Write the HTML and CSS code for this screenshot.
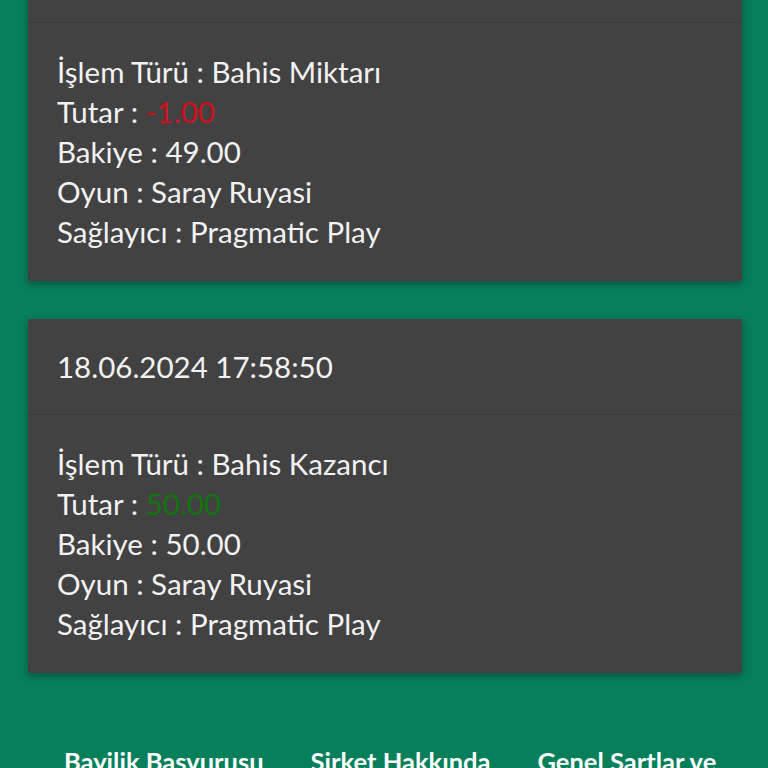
FILE: index.html
```html
<!DOCTYPE html>
<html lang="tr">
  <head>
    <meta charset="utf-8" />
    <link rel="stylesheet" href="styles.css">
  </head>
  <body>
    <div class="list">
      <div class="card">
        <div class="card-head"></div>
        <div class="card-body">
          <div>İşlem Türü : Bahis Miktarı</div>
          <div>Tutar : <span class="neg">-1.00</span></div>
          <div>Bakiye : 49.00</div>
          <div>Oyun : Saray Ruyasi</div>
          <div>Sağlayıcı : Pragmatic Play</div>
        </div>
      </div>
      <div class="card">
        <div class="card-head">18.06.2024 17:58:50</div>
        <div class="card-body">
          <div>İşlem Türü : Bahis Kazancı</div>
          <div>Tutar : <span class="pos">50.00</span></div>
          <div>Bakiye : 50.00</div>
          <div>Oyun : Saray Ruyasi</div>
          <div>Sağlayıcı : Pragmatic Play</div>
        </div>
      </div>
    </div>
    <div class="footer">
      <a href="#">Bayilik Basvurusu</a>
      <a href="#">Sirket Hakkında</a>
      <a href="#">Genel Sartlar ve</a>
    </div>
  </body>
</html>
```

FILE: styles.css
```css
* {
  margin: 0;
  box-sizing: border-box;
}
body {
  background-color: #077f5b;
  font-family: Lato, "Open Sans", sans-serif;
  color: #f2f2f2;
  overflow: hidden;
}
.list {
  margin-top: -73px;
  padding: 0 26px 0 28px;
  display: flex;
  flex-direction: column;
  gap: 38px;
}
.card {
  background-color: #424242;
  box-shadow: 0 3px 8px rgba(0, 0, 0, 0.35);
}
.card-head {
  height: 96px;
  display: flex;
  align-items: center;
  padding-left: 29px;
  font-size: 29.5px;
  border-bottom: 1px solid #3a3a3a;
}
.card-body {
  padding: 29px;
  font-size: 29.5px;
  line-height: 40px;
}
.neg {
  color: #d0101c;
}
.pos {
  color: #11750f;
}
.footer {
  margin-top: 73px;
  display: flex;
  gap: 47px;
  padding-left: 64px;
  white-space: nowrap;
}
.footer a {
  color: #ffffff;
  text-decoration: none;
  font-weight: bold;
  font-size: 25.5px;
}
```
